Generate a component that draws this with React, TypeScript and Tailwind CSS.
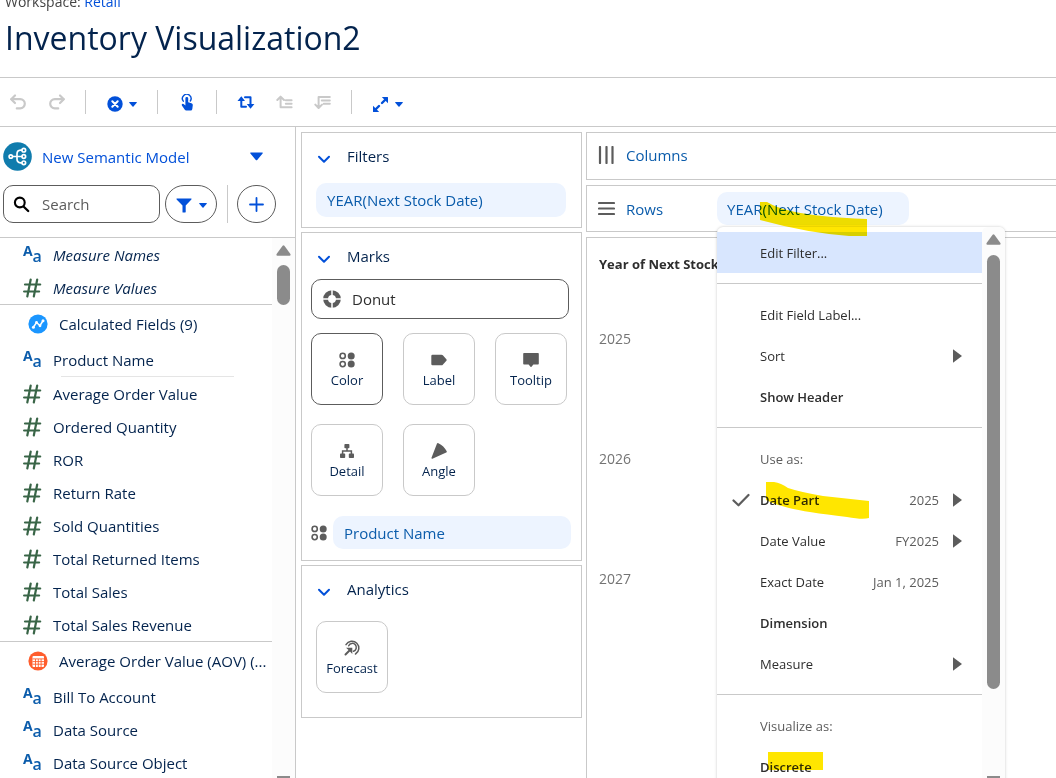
import type { ReactNode } from "react";

const FONT = "font-['Open_Sans','Noto_Sans',sans-serif]";

/* ---------- icons ---------- */

type IconProps = { w: number; h: number; className?: string; children: ReactNode };

function Icon({ w, h, className = "", children }: IconProps) {
  return (
    <svg
      width={w}
      height={h}
      viewBox={`0 0 ${w} ${h}`}
      fill="none"
      aria-hidden="true"
      className={`shrink-0 ${className}`}
    >
      {children}
    </svg>
  );
}

const UndoIcon = ({ className = "" }: { className?: string }) => (
  <Icon w={18} h={18} className={className}>
    <g stroke="currentColor" strokeWidth="2.200" strokeLinecap="round" strokeLinejoin="round">
      <path d="M6 2.500 2.200 6.200 6 10" />
      <path d="M2.500 6.200h8.700a4.600 4.600 0 0 1 0 9.200H7.800" />
    </g>
  </Icon>
);

const Caret = () => (
  <Icon w={8} h={5}>
    <path d="M.5 0h7q.6.3.2.8L4.500 4.600q-.5.5-1 0L.3.800Q-.1.300.5 0Z" fill="currentColor" />
  </Icon>
);

const ClearIcon = () => (
  <Icon w={16} h={16}>
    <circle cx="8" cy="8" r="7.700" fill="currentColor" />
    <path d="m5.300 5.300 5.400 5.400M10.700 5.300l-5.400 5.400" stroke="#fff" strokeWidth="2" strokeLinecap="round" />
  </Icon>
);

const TouchIcon = () => (
  <Icon w={13} h={17}>
    <path d="M2.300 7.200A4.300 4.300 0 1 1 9.300 7" stroke="currentColor" strokeWidth="1.400" strokeLinecap="round" />
    <path
      d="M4.400 4.300a1.400 1.400 0 0 1 2.800 0v4l3.300.9q1.400.4 1.300 1.800l-.5 4q-.2 1.500-1.600 1.500H5.200q-.9 0-1.400-.8L.9 11.500q-.5-.8.2-1.400.9-.6 1.800.1l1.500 1.200Z"
      fill="currentColor"
    />
  </Icon>
);

const SwapIcon = () => (
  <Icon w={18} h={15}>
    <g stroke="currentColor" strokeWidth="2" strokeLinejoin="round" strokeLinecap="round">
      <path d="M4.300 4v7.800H9" />
      <path d="M8 2.300h5.500V11" />
    </g>
    <path d="M.5 6 4.300 1.200 8 6ZM9.800 9l3.700 4.800L17.400 9Z" fill="currentColor" />
  </Icon>
);

const SortUpIcon = () => (
  <Icon w={17} h={15}>
    <g stroke="currentColor" strokeWidth="2" strokeLinecap="round" strokeLinejoin="round">
      <path d="M1.300 5 4.600 1.600 8 5M4.600 2v10.300H15.600M9.800 5.200h5.800M9.800 8.700h5.800" />
    </g>
  </Icon>
);

const SortDownIcon = () => (
  <Icon w={17} h={15}>
    <g stroke="currentColor" strokeWidth="2" strokeLinecap="round" strokeLinejoin="round">
      <path d="M1.300 9.600 4.600 13 8 9.600M4.600 12.500V2H15.800M7.800 5.400h8M9.800 8.800h6" />
    </g>
  </Icon>
);

const ExpandIcon = () => (
  <Icon w={17} h={17}>
    <path d="M10 7 14 3M7 10l-4 4" stroke="currentColor" strokeWidth="2.400" strokeLinecap="round" />
    <path d="M9.800 1h5.700q.5 0 .5.500v5.700ZM1 9.800v5.700q0 .5.500.5h5.700Z" fill="currentColor" />
  </Icon>
);

const ModelIcon = () => (
  <Icon w={29} h={29}>
    <circle cx="14.500" cy="14.500" r="14.300" fill="#107cad" />
    <g stroke="#fff" strokeWidth="1.700">
      <circle cx="7.800" cy="14.500" r="1.700" />
      <circle cx="20.800" cy="8.200" r="1.800" />
      <circle cx="20.800" cy="14.500" r="1.800" />
      <circle cx="20.800" cy="20.800" r="1.800" />
      <path d="M9.500 14.500H19M19 8.200h-1.500q-3.500.3-3.500 3.800v5q0 3.500 3.500 3.800H19" />
    </g>
  </Icon>
);

const SearchIcon = () => (
  <Icon w={17} h={17}>
    <circle cx="6.800" cy="6.500" r="4.900" stroke="#000" strokeWidth="2.100" />
    <path d="m10.500 10.500 4.700 4.500" stroke="#000" strokeWidth="2.300" strokeLinecap="round" />
  </Icon>
);

const FunnelIcon = () => (
  <Icon w={16} h={15}>
    <path d="M.8.500h14.400q.6.300.2.900L9.700 7.500v6.600q0 .4-.5.400H7q-.5 0-.5-.5V7.500L.6 1.400Q.2.800.8.500Z" fill="currentColor" />
  </Icon>
);

const TextFieldIcon = () => (
  <Icon w={19} h={22} className="overflow-visible">
    <g fill="#0b5cab" className="font-['Open_Sans',sans-serif] font-bold not-italic">
      <text x="0" y="12" fontSize="14">A</text>
      <text x="9.500" y="18" fontSize="16" fontWeight="600">a</text>
    </g>
  </Icon>
);

const NumberFieldIcon = () => (
  <Icon w={19} h={20}>
    <path
      d="M7.700 1.500 4.300 18.500M14.200 1.500l-3.400 17M2 6.500h15.200M1.100 13.500h15"
      stroke="#396547"
      strokeWidth="2.200"
      strokeLinecap="round"
    />
  </Icon>
);

const CalculatedIcon = () => (
  <Icon w={20} h={20}>
    <circle cx="10" cy="10" r="9.600" fill="#1b96ff" />
    <path d="m5.500 13 3-4.500 3.500 3 3.200-5" stroke="#fff" strokeWidth="1.500" />
    <g fill="#fff">
      <circle cx="5.400" cy="13.300" r="1.500" />
      <circle cx="8.500" cy="8.400" r="1.400" />
      <circle cx="12" cy="11.800" r="1.400" />
      <circle cx="15" cy="6.700" r="1.500" />
    </g>
  </Icon>
);

const TableIcon = () => (
  <Icon w={20} h={20}>
    <circle cx="10" cy="10" r="9.600" fill="#ff5d2d" />
    <rect x="4.500" y="5" width="11.500" height="11" rx="1" fill="#fff" />
    <path d="M4.500 7.900H16M4.500 10.600H16M4.500 13.200H16M7.500 8v8M10.300 8v8M13.100 8v8" stroke="#ff5d2d" strokeWidth=".9" />
  </Icon>
);

const ChevronIcon = () => (
  <Icon w={14} h={9}>
    <path d="m2 1.800 5 5 5-5" stroke="#0250d9" strokeWidth="2" strokeLinecap="round" strokeLinejoin="round" />
  </Icon>
);

const DonutIcon = () => (
  <Icon w={18} h={18}>
    <circle cx="9" cy="9" r="6.400" stroke="#5c5c5c" strokeWidth="4.900" />
    <path d="M9 0v18M0 9h18" stroke="#fff" strokeWidth="1.500" />
  </Icon>
);

const ColorIcon = () => (
  <Icon w={16} h={16}>
    <g stroke="#5c5c5c" strokeWidth="1.600">
      <circle cx="3.700" cy="3.900" r="2.600" />
      <circle cx="3.700" cy="12.100" r="2.600" />
    </g>
    <circle cx="12.200" cy="3.900" r="3.500" fill="#5c5c5c" />
    <circle cx="12.200" cy="12.100" r="3.500" fill="#5c5c5c" />
  </Icon>
);

const LabelIcon = () => (
  <Icon w={16} h={16}>
    <path d="M1.500 2.800h9q.8 0 1.300.5l3.600 4q.6.700 0 1.400l-3.600 4q-.5.500-1.300.5h-9Q.3 13.200.3 12V4Q.3 2.800 1.500 2.800Z" fill="#5c5c5c" />
  </Icon>
);

const TooltipIcon = () => (
  <Icon w={16} h={16}>
    <path d="M1 1h14q.8 0 .8.800v10q0 .8-.8.800h-4.600L8.500 14.800q-.5.500-1 0L5.600 12.600H1q-.8 0-.8-.8v-10Q.2 1 1 1Z" fill="#5c5c5c" />
  </Icon>
);

const DetailIcon = () => (
  <Icon w={16} h={16}>
    <g fill="#5c5c5c">
      <rect x="5.400" y="1" width="5" height="4.300" rx=".8" />
      <rect x="1" y="10.600" width="5.200" height="4.400" rx=".8" />
      <rect x="9.800" y="10.600" width="5.200" height="4.400" rx=".8" />
    </g>
    <path d="M8 5v3M3.600 11V8h8.800v3" stroke="#5c5c5c" strokeWidth="1.500" />
  </Icon>
);

const AngleIcon = () => (
  <Icon w={16} h={16}>
    <path d="M6 .6q.5-.9 1.400-.4 5.500 2.700 8.300 8.100.4.900-.5 1.300L1.400 15.700q-1.200.2-.9-1Z" fill="#5c5c5c" />
  </Icon>
);

const ForecastIcon = () => (
  <Icon w={17} h={17}>
    <g stroke="#5c5c5c" strokeWidth="1.500" strokeLinecap="round">
      <path d="M2 5.600A6.900 6.900 0 1 1 11.500 15" />
      <path d="M4.700 6.700a4 4 0 1 1 4.800 5.500" />
      <path d="M1.500 15.500 6.500 10.500" strokeWidth="2" />
    </g>
    <path d="M2 8.700h6.300v6.200L6.500 13 4 10.500Z" fill="#5c5c5c" />
  </Icon>
);

const ColumnsIcon = () => (
  <Icon w={17} h={18}>
    <path d="M2 1v16M8.500 1v16M14.500 1v16" stroke="#5c5c5c" strokeWidth="2.200" strokeLinecap="round" />
  </Icon>
);

const RowsIcon = () => (
  <Icon w={17} h={15}>
    <path d="M1 2h15M1 7.500h15M1 13h15" stroke="#5c5c5c" strokeWidth="2.200" strokeLinecap="round" />
  </Icon>
);

const CheckIcon = () => (
  <Icon w={19} h={14}>
    <path d="m1.500 7.500 5 4.800L16.500 2" stroke="#5c5c5c" strokeWidth="2.200" strokeLinecap="round" strokeLinejoin="round" />
  </Icon>
);

const SubmenuIcon = () => (
  <Icon w={9} h={14}>
    <path d="M0 .3v13.400l9-6.700Z" fill="#5c5c5c" />
  </Icon>
);

const ScrollArrow = () => (
  <Icon w={15} h={11}>
    <path d="M6.600.700q.9-1 1.800 0l6 8.200q.7 1.600-.9 1.800h-12Q-.1 10.500.6 8.900Z" fill="#8b8b8b" />
  </Icon>
);

/* ---------- toolbar ---------- */

const Divider = () => <div className="h-6 w-px bg-[#c9c9c9]" />;

function Toolbar() {
  return (
    <div className="flex h-[49px] shrink-0 items-center border-b border-[#c9c9c9] text-[#0250d9]">
      <div className="flex w-[85px] text-[#c9c9c9]">
        <button aria-label="Undo" className="flex w-[35px] justify-center"><UndoIcon /></button>
        <button aria-label="Redo" className="flex w-[43px] justify-center"><UndoIcon className="-scale-x-100" /></button>
      </div>
      <Divider />
      <button aria-label="Clear" className="flex w-[71px] items-center justify-center gap-[6px] pt-1">
        <ClearIcon /><Caret />
      </button>
      <Divider />
      <button aria-label="Interact" className="flex w-[58px] justify-center"><TouchIcon /></button>
      <Divider />
      <div className="flex w-[134px] justify-center gap-[21px] text-[#c9c9c9]">
        <button aria-label="Swap rows and columns" className="text-[#0250d9]"><SwapIcon /></button>
        <button aria-label="Sort ascending"><SortUpIcon /></button>
        <button aria-label="Sort descending"><SortDownIcon /></button>
      </div>
      <Divider />
      <button aria-label="Fit" className="flex items-center gap-[6px] pl-5 pt-1"><ExpandIcon /><Caret /></button>
    </div>
  );
}

/* ---------- field list ---------- */

type FieldProps = { kind: "text" | "number"; name: string; italic?: boolean };

function Field({ kind, name, italic }: FieldProps) {
  return (
    <li>
      <button className={`flex h-[33px] w-full items-center gap-[11px] pl-[23px] text-left ${italic ? "italic" : ""}`}>
        {kind === "text" ? <TextFieldIcon /> : <NumberFieldIcon />}
        <span>{name}</span>
      </button>
    </li>
  );
}

function GroupHeader({ icon, name }: { icon: ReactNode; name: string }) {
  return (
    <button className="flex h-[38px] w-full items-center gap-[11px] pl-7 text-left">
      {icon}
      <span className="truncate">{name}</span>
    </button>
  );
}

const measures = [
  "Average Order Value",
  "Ordered Quantity",
  "ROR",
  "Return Rate",
  "Sold Quantities",
  "Total Returned Items",
  "Total Sales",
  "Total Sales Revenue",
];

function Sidebar() {
  return (
    <aside className="flex w-[296px] shrink-0 flex-col border-r border-[#c9c9c9]">
      <div className="border-b border-[#c9c9c9] pb-[14px] pt-[15px]">
        <button className="flex w-full items-center pl-[3px] pr-8 text-[#0250d9]">
          <ModelIcon />
          <span className="pl-[10px]">New Semantic Model</span>
          <Icon w={13} h={9} className="ml-auto">
            <path d="M.6.500h11.800q.7.400.2 1L7.200 8q-.7.700-1.400 0L.4 1.500Q-.1.900.6.500Z" fill="currentColor" />
          </Icon>
        </button>
        <div className="flex items-center pl-[3px] pt-[14px] text-[#0250d9]">
          <label className="flex h-[38px] w-[157px] items-center gap-3 rounded-[10px] border border-[#5c5c5c] pl-[9px]">
            <SearchIcon />
            <input
              type="text"
              placeholder="Search"
              aria-label="Search fields"
              className="w-[100px] bg-transparent text-[#2e2e2e] outline-none placeholder:text-[#5c5c5c]"
            />
          </label>
          <button
            aria-label="Filter fields"
            className="ml-[5px] flex h-[38px] w-[52px] items-center justify-center gap-[7px] rounded-full border border-[#5c5c5c] pt-[2px]"
          >
            <FunnelIcon /><Caret />
          </button>
          <div className="ml-[10px] mr-[9px] h-[38px] w-px bg-[#c9c9c9]" />
          <button
            aria-label="Add field"
            className="flex h-[38px] w-[39px] items-center justify-center rounded-full border border-[#5c5c5c]"
          >
            <Icon w={15} h={15}>
              <path d="M7.500 1v13M1 7.500h13" stroke="currentColor" strokeWidth="1.800" strokeLinecap="round" />
            </Icon>
          </button>
        </div>
      </div>
      <div className="flex min-h-0 flex-1 overflow-hidden text-[#03234d]">
        <div className="min-w-0 flex-1">
          <ul className="border-b border-[#c9c9c9]">
            <Field kind="text" name="Measure Names" italic />
            <Field kind="number" name="Measure Values" italic />
          </ul>
          <GroupHeader icon={<CalculatedIcon />} name="Calculated Fields (9)" />
          <ul><Field kind="text" name="Product Name" /></ul>
          <hr className="ml-[61px] mr-[38px] border-[#e5e5e5]" />
          <ul className="border-b border-[#c9c9c9]">
            {measures.map((m) => <Field key={m} kind="number" name={m} />)}
          </ul>
          <GroupHeader icon={<TableIcon />} name="Average Order Value (AOV) (..." />
          <ul>
            <Field kind="text" name="Bill To Account" />
            <Field kind="text" name="Data Source" />
            <Field kind="text" name="Data Source Object" />
          </ul>
        </div>
        <div className="flex w-[23px] shrink-0 flex-col items-center bg-[#fcfcfc] pt-[7px]">
          <ScrollArrow />
          <div className="mt-[9px] h-10 w-[13px] rounded-full bg-[#8b8b8b]" />
          <div className="mt-auto h-[2px] w-[13px] bg-[#8b8b8b]" />
        </div>
      </div>
    </aside>
  );
}

/* ---------- cards ---------- */

function Card({ title, className = "", children }: { title: string; className?: string; children: ReactNode }) {
  return (
    <section className={`border border-[#c9c9c9] ${className}`}>
      <h2>
        <button className="flex h-[46px] items-center gap-4 pl-[15px] text-[#03234d]">
          <span className="pt-[6px]"><ChevronIcon /></span>
          {title}
        </button>
      </h2>
      {children}
    </section>
  );
}

function Tile({ icon, label, active }: { icon: ReactNode; label: string; active?: boolean }) {
  return (
    <button
      className={`flex size-[72px] flex-col items-center justify-center gap-[2px] rounded-[10px] border pt-[3px] text-[13px] leading-5 text-[#03234d] ${
        active ? "border-[#5c5c5c]" : "border-[#c9c9c9]"
      }`}
    >
      {icon}
      {label}
    </button>
  );
}

function Cards() {
  return (
    <div className="flex w-[281px] shrink-0 flex-col gap-[4px]">
      <Card title="Filters" className="pb-[10px]">
        <button className="ml-[14px] mt-1 flex h-[34px] w-[250px] items-center rounded-[10px] bg-[#edf4ff] pl-[11px] text-[#0b5cab]">
          YEAR(Next Stock Date)
        </button>
      </Card>
      <Card title="Marks" className="pb-[11px] pl-[9px] [&>h2]:-ml-[9px]">
        <label className="flex h-10 w-[258px] items-center rounded-[10px] border border-[#5c5c5c] pl-[11px] text-[#2e2e2e]">
          <DonutIcon />
          <select aria-label="Mark type" className="ml-[11px] flex-1 appearance-none bg-transparent outline-none">
            <option>Donut</option>
          </select>
        </label>
        <div className="mt-[14px] grid w-fit grid-cols-3 gap-x-5 gap-y-[19px]">
          <Tile icon={<ColorIcon />} label="Color" active />
          <Tile icon={<LabelIcon />} label="Label" />
          <Tile icon={<TooltipIcon />} label="Tooltip" />
          <Tile icon={<DetailIcon />} label="Detail" />
          <Tile icon={<AngleIcon />} label="Angle" />
        </div>
        <div className="mt-5 flex items-center gap-[6px]">
          <ColorIcon />
          <button className="flex h-[33px] w-[238px] items-center rounded-[10px] bg-[#edf4ff] pl-[11px] text-[#0b5cab]">
            Product Name
          </button>
        </div>
      </Card>
      <Card title="Analytics" className="pb-6">
        <div className="pl-[14px] pt-[9px]">
          <Tile icon={<ForecastIcon />} label="Forecast" />
        </div>
      </Card>
    </div>
  );
}

/* ---------- context menu ---------- */

type ItemProps = { label: string; value?: string; bold?: boolean; checked?: boolean; submenu?: boolean; active?: boolean };

function Item({ label, value, bold, checked, submenu, active }: ItemProps) {
  return (
    <button
      role="menuitem"
      className={`flex h-[41px] w-full items-center pl-[15px] pr-5 text-left text-[#2e2e2e] ${active ? "bg-[#d8e6fe]" : ""}`}
    >
      <span className="w-7 shrink-0">{checked && <CheckIcon />}</span>
      <span className={bold ? "font-semibold" : ""}>{label}</span>
      <span className="ml-auto text-[#5c5c5c]">{value}</span>
      <span className="ml-[14px] w-[9px]">{submenu && <SubmenuIcon />}</span>
    </button>
  );
}

const Separator = () => <hr className="my-[10px] border-[#c9c9c9]" />;
const Caption = ({ children }: { children: ReactNode }) => (
  <div className="flex h-[41px] items-center pl-[43px] text-[#5c5c5c]">{children}</div>
);

function ContextMenu() {
  return (
    <div
      role="menu"
      className="absolute left-0 top-[35px] z-10 flex h-[600px] w-[288px] rounded-t-md bg-white text-[13px] shadow-[0_0_3px_rgba(0,0,0,0.22)]"
    >
      <div className="flex-1 pt-[5px]">
        <Item label="Edit Filter..." active />
        <Separator />
        <Item label="Edit Field Label..." />
        <Item label="Sort" submenu />
        <Item label="Show Header" bold />
        <Separator />
        <Caption>Use as:</Caption>
        <Item label="Date Part" value="2025" bold checked submenu />
        <Item label="Date Value" value="FY2025" submenu />
        <Item label="Exact Date" value="Jan 1, 2025" />
        <Item label="Dimension" bold />
        <Item label="Measure" submenu />
        <Separator />
        <Caption>Visualize as:</Caption>
        <Item label="Discrete" bold />
      </div>
      <div className="flex w-[23px] shrink-0 flex-col items-center rounded-t-md bg-[#fcfcfc] pt-[7px]">
        <ScrollArrow />
        <div className="mt-[10px] h-[434px] w-[13px] rounded-full bg-[#8b8b8b]" />
        <div className="mt-[87px] h-[11px] w-[13px] bg-[#8b8b8b]" />
      </div>
    </div>
  );
}

/* Marker strokes drawn over the pill and its menu. */
function Highlights() {
  return (
    <svg
      width="192"
      height="586"
      viewBox="0 0 192 586"
      fill="#ffe600"
      aria-hidden="true"
      className="pointer-events-none absolute left-0 top-0 z-20 mix-blend-multiply"
    >
      <path d="M43 10h7q10 6 24 9 25 6 76 8v17h-18Q90 41 43 28Z" />
      <path d="M49 290h8q7 1 14 6 12 4 35 8l46 5v17q-6 2-22-1-42-5-58-9l-14-4-9-4Z" />
      <path d="M51 560h55v18H51Z" />
    </svg>
  );
}

/* ---------- canvas ---------- */

function Canvas() {
  return (
    <main className="flex min-w-0 flex-1 flex-col gap-[5px]">
      <section className="flex h-12 shrink-0 items-center border border-r-0 border-[#c9c9c9] pb-[2px] pl-[11px] text-[#0b5cab]">
        <ColumnsIcon />
        <h2 className="pl-[11px]">Columns</h2>
      </section>
      <section className="flex h-[47px] shrink-0 items-center border border-r-0 border-[#c9c9c9] pl-[11px] text-[#0b5cab]">
        <RowsIcon />
        <h2 className="w-[102px] pl-[11px]">Rows</h2>
        <div className="relative">
          <button className="flex h-[33px] w-[192px] items-center rounded-[10px] bg-[#edf4ff] pl-[10px]">
            YEAR(Next Stock Date)
          </button>
          <ContextMenu />
          <Highlights />
        </div>
      </section>
      <section className="min-h-0 flex-1 overflow-hidden border border-b-0 border-r-0 border-[#c9c9c9] pl-3">
        <table className="text-left text-sm text-[#747474]">
          <thead>
            <tr className="h-[41px] text-[#2e2e2e]">
              <th className="whitespace-nowrap p-0 pt-3 text-[13px] font-bold">Year of Next Stock Date</th>
            </tr>
          </thead>
          <tbody>
            {["2025", "2026", "2027"].map((year) => (
              <tr key={year} className="h-[120px]">
                <td className="p-0">{year}</td>
              </tr>
            ))}
          </tbody>
        </table>
      </section>
    </main>
  );
}

export default function App() {
  return (
    <div className={`flex h-screen flex-col overflow-hidden bg-white text-[15px] leading-6 ${FONT}`}>
      <header className="flex h-[78px] shrink-0 flex-col justify-end overflow-hidden border-b border-[#c9c9c9] pb-[19px] pl-[5px]">
        <p className="shrink-0 text-sm text-[#444]">
          Workspace: <a href="#retail" className="text-[#0250d9]">Retail</a>
        </p>
        <h1 className="mt-[6px] shrink-0 text-[32px] leading-10 text-[#03234d]">Inventory Visualization2</h1>
      </header>
      <Toolbar />
      <div className="flex min-h-0 flex-1 gap-[5px]">
        <Sidebar />
        <div className="flex min-w-0 flex-1 gap-[4px] pt-[5px]">
          <Cards />
          <Canvas />
        </div>
      </div>
    </div>
  );
}
